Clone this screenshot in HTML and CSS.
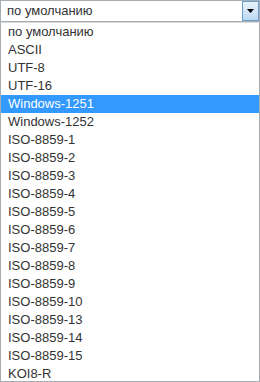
FILE: index.html
```html
<!DOCTYPE html>
<html>
<head>
<meta charset="utf-8">
<link rel="stylesheet" href="styles.css">
</head>
<body>
<div class="select">
  <div class="value">по умолчанию</div>
  <div class="btn"><svg width="7" height="4" viewBox="0 0 7 4"><path d="M0 0H7L3.5 4Z" fill="#000"/></svg></div>
</div>
<ul class="list">
  <li>по умолчанию</li>
  <li>ASCII</li>
  <li>UTF-8</li>
  <li>UTF-16</li>
  <li class="sel">Windows-1251</li>
  <li>Windows-1252</li>
  <li>ISO-8859-1</li>
  <li>ISO-8859-2</li>
  <li>ISO-8859-3</li>
  <li>ISO-8859-4</li>
  <li>ISO-8859-5</li>
  <li>ISO-8859-6</li>
  <li>ISO-8859-7</li>
  <li>ISO-8859-8</li>
  <li>ISO-8859-9</li>
  <li>ISO-8859-10</li>
  <li>ISO-8859-13</li>
  <li>ISO-8859-14</li>
  <li>ISO-8859-15</li>
  <li>KOI8-R</li>
</ul>
</body>
</html>
```
FILE: styles.css
```css
html, body { margin: 0; padding: 0; background: #fff; }
body { width: 260px; height: 382px; overflow: hidden; font-family: "Liberation Sans", Arial, sans-serif; font-size: 13px; color: #333; }
.select { box-sizing: border-box; height: 22px; border: 1px solid #a5acb2; display: flex; align-items: stretch; }
.value { flex: 1; padding-left: 6px; line-height: 20px; }
.btn { box-sizing: border-box; width: 17px; border: 1px solid #6a9fce; background: linear-gradient(#e8f2fb, #bcd8f2); display: flex; align-items: center; justify-content: center; }
.list { list-style: none; margin: 0; padding: 0; box-sizing: border-box; height: 360px; border: 1px solid #a5acb2; border-top: 1px solid #d9d9d9; }
.list li { height: 18px; line-height: 18px; padding-left: 7px; }
.list li.sel { background: #3399ff; color: #fff; }
```
